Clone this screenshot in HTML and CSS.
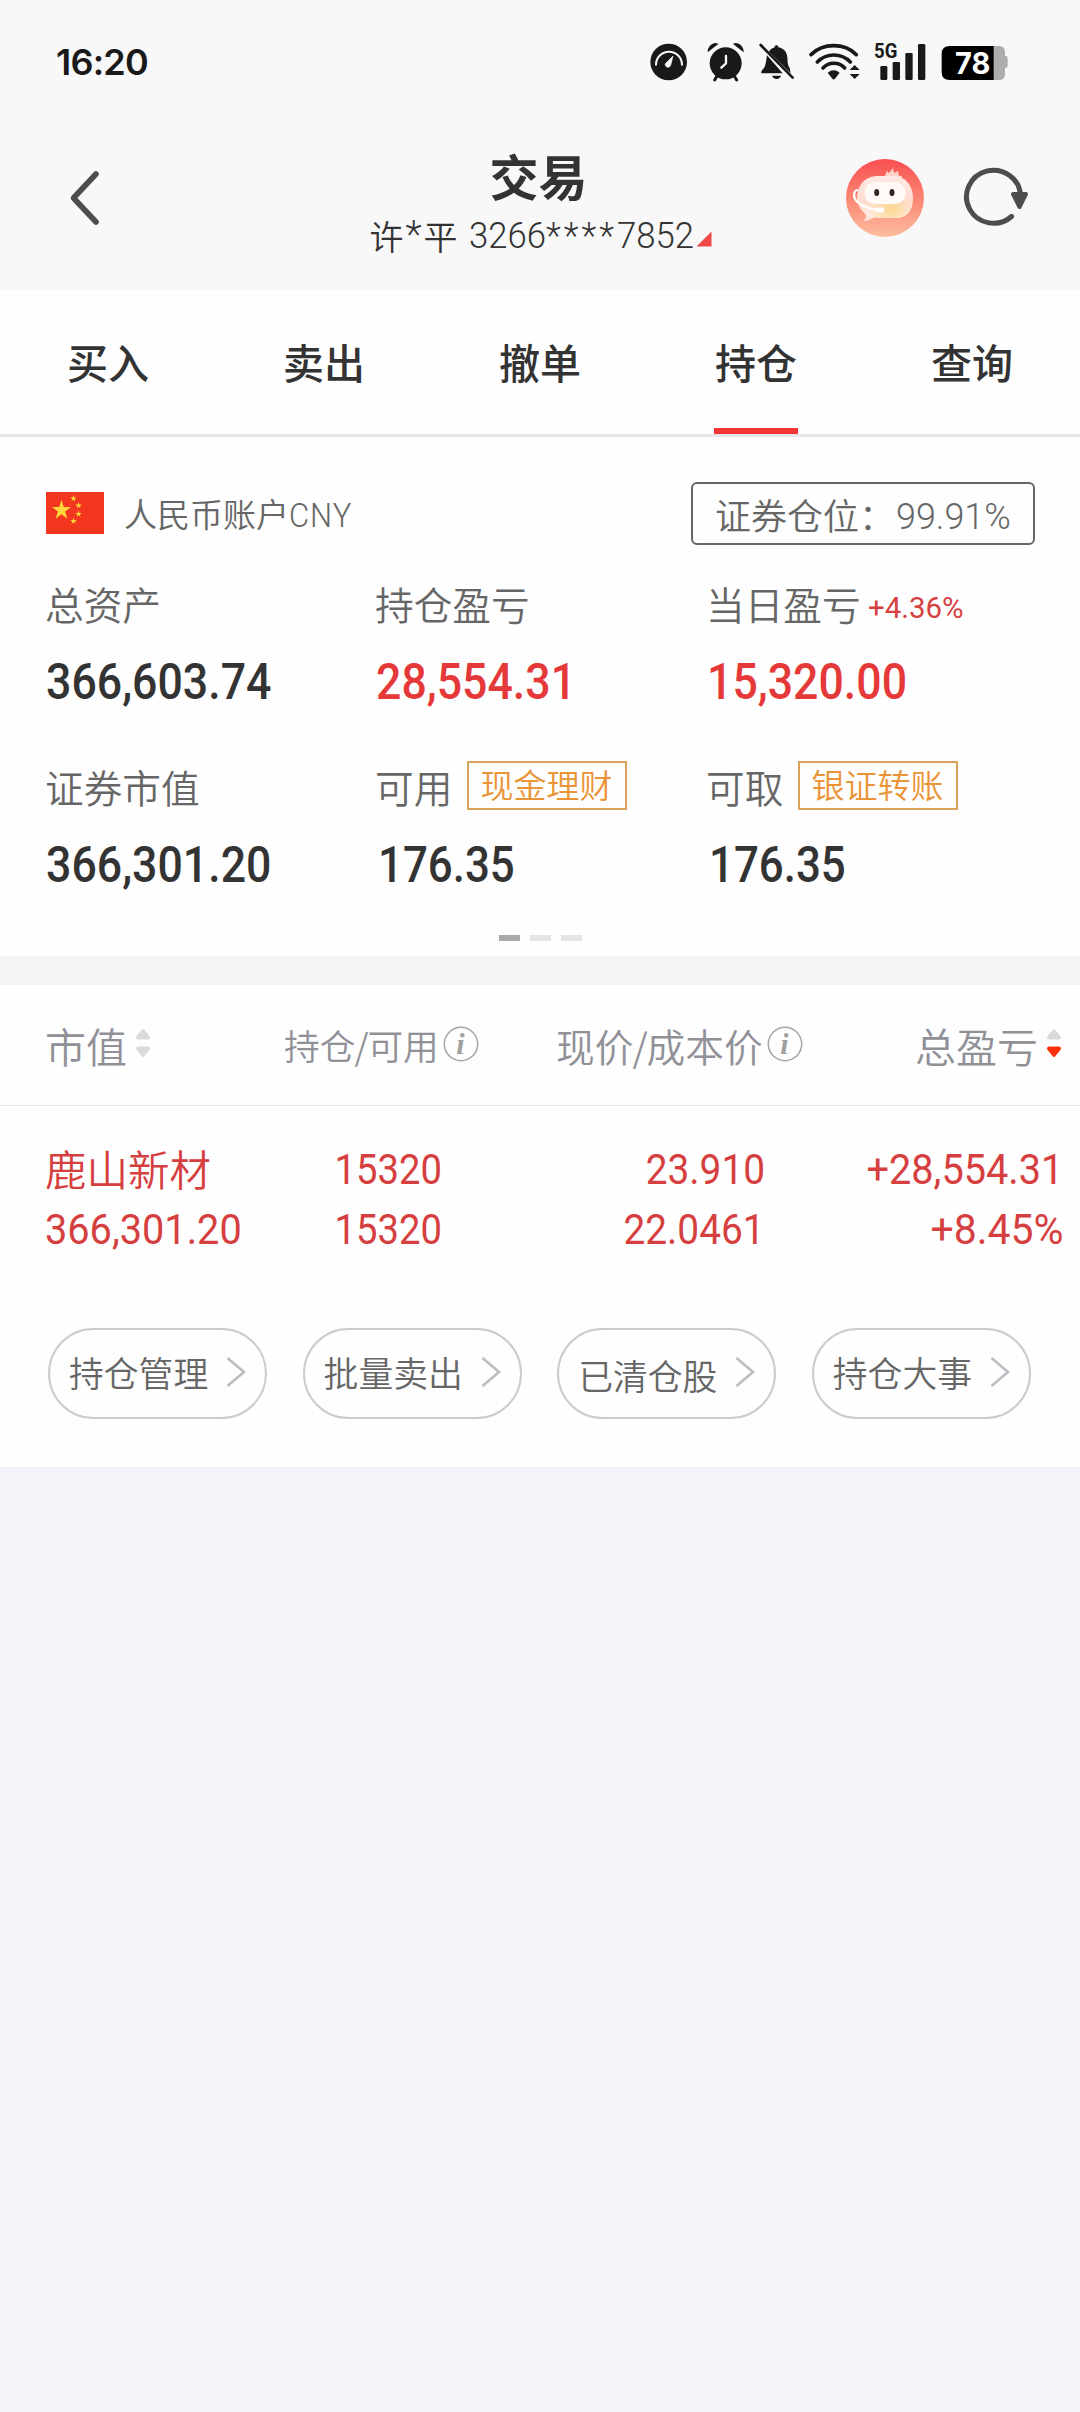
FILE: index.html
```html
<!DOCTYPE html>
<html lang="zh-CN">
<head>
<meta charset="utf-8">
<meta name="viewport" content="width=1080">
<title>交易</title>
<link rel="stylesheet" href="styles.css">
</head>
<body>
<header class="top">
  <div class="status">
    <span class="clock">16:20</span>
    <div class="status-icons">
      <svg class="ic-gauge" viewBox="60 66 112 118"><circle cx="116" cy="126" r="55" fill="#191919"/><path d="M78 134a39 39 0 1 1 78 0" fill="none" stroke="#f8f8f8" stroke-width="6" stroke-linecap="round"/><path d="M129 108l-7 28c-3 10-19 6-16-5z" fill="#f8f8f8" stroke="#f8f8f8" stroke-width="2" stroke-linejoin="round"/></svg>
      <svg class="ic-alarm" viewBox="230 66 112 118"><g fill="#191919"><circle cx="286" cy="130" r="48"/><path d="M232 97c-1-22 22-34 32-25z"/><path d="M340 97c1-22-22-34-32-25z"/></g><path d="M260 168l-7 12M312 168l7 12" stroke="#191919" stroke-width="9" stroke-linecap="round"/><path d="M287 108v22l-14 13" fill="none" stroke="#f8f8f8" stroke-width="7" stroke-linecap="round" stroke-linejoin="round"/></svg>
      <svg class="ic-bell" viewBox="388 66 106 118"><path d="M412 106L459 160H398C390 160 397 150 403 144C409 134 409 124 412 106ZM418 95C422 88 428 84 435 82C435 74 446 74 446 82C465 86 472 98 473 112C474 128 474 135 480 144L483 160Z" fill="#191919"/><path d="M427 167h27c-4 13-22 13-27 0z" fill="#191919"/><path d="M393 75l96 98" stroke="#191919" stroke-width="8" stroke-linecap="round"/></svg>
      <svg class="ic-wifi" viewBox="538 66 154 118"><g fill="none" stroke="#191919" stroke-width="11" stroke-linecap="round"><path d="M544 104C580 68 645 68 680 104"/><path d="M563 126C590 98 635 98 662 126"/><path d="M580 144C598 125 628 125 645 144"/></g><path d="M594 158q18-14 36 0l-14 18q-4 5-8 0z" fill="#191919"/><path d="M660 150l15-15 15 15zM660 162h30l-15 15z" fill="#191919"/></svg>
      <svg class="ic-signal" viewBox="732 66 156 118"><g fill="#191919"><rect x="751" y="138" width="21" height="42" rx="4"/><rect x="788" y="126" width="22" height="54" rx="4"/><rect x="826" y="99" width="22" height="81" rx="4"/><rect x="864" y="72" width="22" height="108" rx="4"/></g><text class="net" x="732" y="115" textLength="70" lengthAdjust="spacingAndGlyphs">5G</text></svg>
      <svg class="ic-battery" viewBox="934 66 200 118"><path d="M1090 78h18q18 0 18 18v12h4q4 0 4 8v20q0 8-4 8h-4v18q0 18-18 18h-18z" fill="#adadad"/><path d="M1092 78H960q-24 0-24 24v54q0 24 24 24h132z" fill="#000"/><text class="level" x="976" y="163" textLength="106" lengthAdjust="spacingAndGlyphs">78</text></svg>
    </div>
  </div>
  <nav class="nav">
    <svg class="back" viewBox="0 0 30 54"><path d="M26 3L3.500 27L26 51" fill="none" stroke="#4d4d4d" stroke-width="5.600" stroke-linecap="round" stroke-linejoin="round"/></svg>
    <div class="heading">
      <h1>交易</h1>
      <div class="account">许<span class="star">*</span>平<span class="acct-no">3266<span class="mask">****</span>7852</span><i class="corner"></i></div>
    </div>
    <div class="actions">
      <svg class="bot" viewBox="0 0 78 78">
        <defs>
          <linearGradient id="sky" x1="0" y1="0" x2="0" y2="1"><stop offset="0" stop-color="#f94f50"/><stop offset=".5" stop-color="#fa8674"/><stop offset="1" stop-color="#fdbd9f"/></linearGradient>
          <linearGradient id="head" x1="0" y1="0" x2="0" y2="1"><stop offset="0" stop-color="#ffe9e4"/><stop offset=".6" stop-color="#ffdccf"/><stop offset="1" stop-color="#fff0e6"/></linearGradient>
          <radialGradient id="glow" cx=".6" cy=".8" r=".4"><stop offset="0" stop-color="#fbd68c"/><stop offset="1" stop-color="#fbd68c" stop-opacity="0"/></radialGradient>
        </defs>
        <circle cx="39" cy="39" r="39" fill="url(#sky)"/>
        <path d="M39 17l2-5 2 2 4-5 1 5 4-2 1 5 3 0 0 6z" fill="#ffd3cb"/>
        <path d="M17 50l3 7q0 3-3 5 8 0 13-5z" fill="#ffe3d6"/>
        <path d="M30 17h17c13 0 20 10 20 23 0 12-7 19-17 19H34C20 59 12 50 11 40c0-13 7-22 19-23z" fill="url(#head)"/>
        <path d="M30 17h17c13 0 20 10 20 23 0 12-7 19-17 19H34C20 59 12 50 11 40c0-13 7-22 19-23z" fill="url(#glow)"/>
        <rect x="18.500" y="23" width="41" height="22" rx="10.500" fill="#fffaf8"/>
        <ellipse cx="30.700" cy="33.500" rx="2.500" ry="3.500" fill="#33261f"/><ellipse cx="46" cy="33.500" rx="2.500" ry="3.500" fill="#33261f"/>
        <path d="M11.500 31c-5 1-4 9 0 12 5 4 12 7 20 8" fill="none" stroke="#fff" stroke-width="2.200" stroke-linecap="round"/><rect x="29.500" y="48.500" width="9" height="5" rx="2.500" fill="#fff"/>
      </svg>
      <svg class="refresh" viewBox="0 0 64 60"><path d="M46.500 50.500A27 26.500 0 1 1 55.500 30" fill="none" stroke="#4d4d4d" stroke-width="5" stroke-linecap="round"/><path d="M48 28h13l-6.500 13z" fill="#4d4d4d" stroke="#4d4d4d" stroke-width="4" stroke-linejoin="round"/></svg>
    </div>
  </nav>
</header>

<div class="tabs">
  <a class="tab">买入</a><a class="tab">卖出</a><a class="tab">撤单</a><a class="tab active">持仓</a><a class="tab">查询</a>
</div>

<section class="assets">
  <div class="currency">
    <svg class="flag" viewBox="0 0 58 42"><rect width="58" height="42" fill="#f2361f"/><g fill="#ffd93b"><path d="M15.500 8l2.200 7.100h7.300l-5.900 4.400 2.300 7.200-5.900-4.500-5.900 4.500 2.300-7.200L6 15.100h7.300z"/><path d="M27.500 3l.8 2.400h2.500l-2 1.500.7 2.400-2-1.500-2 1.500.7-2.400-2-1.500h2.500z"/><path d="M32.600 10l.8 2.400h2.500l-2 1.500.7 2.400-2-1.500-2 1.500.7-2.400-2-1.500h2.500z"/><path d="M32.600 18.500l.8 2.400h2.500l-2 1.500.7 2.400-2-1.500-2 1.500.7-2.400-2-1.500h2.500z"/><path d="M27.500 25.500l.8 2.400h2.500l-2 1.500.7 2.400-2-1.500-2 1.500.7-2.400-2-1.500h2.500z"/></g></svg>
    <span class="currency-name">人民币账户<span class="code">CNY</span></span>
    <span class="ratio">证券仓位：<span class="ratio-value">99.91%</span></span>
  </div>
  <div class="grid">
    <div class="cell"><div class="label">总资产</div><div class="value">366,603.74</div></div>
    <div class="cell"><div class="label">持仓盈亏</div><div class="value up">28,554.31</div></div>
    <div class="cell"><div class="label">当日盈亏<span class="pct">+4.36%</span></div><div class="value up">15,320.00</div></div>
    <div class="cell"><div class="label">证券市值</div><div class="value">366,301.20</div></div>
    <div class="cell"><div class="label">可用<span class="tag">现金理财</span></div><div class="value one">176.35</div></div>
    <div class="cell"><div class="label">可取<span class="tag">银证转账</span></div><div class="value one">176.35</div></div>
  </div>
  <div class="pager"><i class="on"></i><i></i><i></i></div>
</section>

<section class="holdings">
  <div class="thead">
    <div class="th big">市值<svg class="sort" viewBox="0 0 16 30"><path d="M7 1.500q1-1 2 0l5.500 6.500q1.500 3.500-2 3.500h-9q-3.500 0-2-3.500z" fill="#dadada"/><path d="M7 28.500q1 1 2 0l5.500-6.500q1.500-3.500-2-3.500h-9q-3.500 0-2 3.500z" fill="#dadada"/></svg></div>
    <div class="th small">持仓<span class="slash">/</span>可用<svg class="info" viewBox="0 0 36 36"><circle cx="18" cy="18" r="16.700" fill="none" stroke="#a5a5a5" stroke-width="1.500"/><text class="info-i" x="17.500" y="28">i</text></svg></div>
    <div class="th mid">现价<span class="slash">/</span>成本价<svg class="info" viewBox="0 0 36 36"><circle cx="18" cy="18" r="16.700" fill="none" stroke="#a5a5a5" stroke-width="1.500"/><text class="info-i" x="17.500" y="28">i</text></svg></div>
    <div class="th big last">总盈亏<svg class="sort" viewBox="0 0 16 30"><path d="M7 1.500q1-1 2 0l5.500 6.500q1.500 3.500-2 3.500h-9q-3.500 0-2-3.500z" fill="#dadada"/><path d="M7 28.500q1 1 2 0l5.500-6.500q1.500-3.500-2-3.500h-9q-3.500 0-2 3.500z" fill="#fd3009"/></svg></div>
  </div>
  <div class="row">
    <div class="col left"><span class="name">鹿山新材</span><span class="n amount">366,301.20</span></div>
    <div class="col"><span class="n">15320</span><span class="n">15320</span></div>
    <div class="col"><span class="n price">23.910</span><span class="n price">22.0461</span></div>
    <div class="col"><span class="n amount">+28,554.31</span><span class="n percent">+8.45%</span></div>
  </div>
  <div class="links">
    <a class="link">持仓管理<svg class="chev" viewBox="0 0 20 30"><path d="M1.500 1l16.500 14L1.500 29" fill="none" stroke="#bcbcc2" stroke-width="2.600"/></svg></a>
    <a class="link">批量卖出<svg class="chev" viewBox="0 0 20 30"><path d="M1.500 1l16.500 14L1.500 29" fill="none" stroke="#bcbcc2" stroke-width="2.600"/></svg></a>
    <a class="link"><span class="low">已清仓股</span><svg class="chev" viewBox="0 0 20 30"><path d="M1.500 1l16.500 14L1.500 29" fill="none" stroke="#bcbcc2" stroke-width="2.600"/></svg></a>
    <a class="link">持仓大事<svg class="chev" viewBox="0 0 20 30"><path d="M1.500 1l16.500 14L1.500 29" fill="none" stroke="#bcbcc2" stroke-width="2.600"/></svg></a>
  </div>
</section>
</body>
</html>
```
FILE: styles.css
```css
* { box-sizing: border-box; }
body {
  margin: 0;
  width: 1080px;
  min-height: 2412px;
  background: #f2f4f9;
  color: #333;
  font-family: "Noto Sans CJK SC", sans-serif;
  font-weight: 350;
  white-space: nowrap;
}
svg { display: block; flex: none; overflow: visible; }

/* status bar */
.top { height: 290px; background: #f8f8f8; }
.status {
  display: flex;
  align-items: center;
  justify-content: space-between;
  height: 124px;
  padding: 0 72px 0 56px;
}
.clock { font: 600 36px/40px Inter, sans-serif; color: #191919; letter-spacing: -0.8px; }
.status-icons { display: flex; }
.status-icons svg { height: 39.33px; }
.ic-gauge { width: 37.33px; }
.ic-alarm { width: 37.33px; margin-left: 19.33px; }
.ic-bell { width: 35.33px; margin-left: 15.33px; }
.ic-wifi { width: 51.33px; margin-left: 14.67px; }
.ic-signal { width: 52px; margin-left: 13.33px; }
.ic-battery { width: 66.67px; margin-left: 15.33px; }
.net { font: 700 61px Roboto, sans-serif; fill: #191919; }
.level { font: 700 91px Inter, sans-serif; fill: #fff; }

/* title bar */
.nav { display: grid; grid-template-columns: 1fr auto 1fr; height: 148px; }
.back { width: 30px; height: 54px; margin: 47px 0 0 70px; }
.heading { padding-top: 21px; text-align: center; }
h1 { margin: 0 3px 0 0; font-size: 49px; line-height: 60px; font-weight: 700; }
.account {
  display: flex;
  align-items: center;
  justify-content: center;
  height: 60px;
  padding-left: 1px;
  font-size: 34px;
}
.star { width: 20px; font: 300 38px/58px Roboto, sans-serif; }
.acct-no {
  width: 225px;
  margin: 2px 0 0 11px;
  font: 300 37px/58px Roboto, sans-serif;
  text-align: left;
  transform: scaleX(.938);
  transform-origin: left;
}
.mask { letter-spacing: 3.2px; }
.corner {
  width: 15px;
  height: 15px;
  margin: 8px 0 0 3px;
  background: #f24848;
  clip-path: polygon(100% 0, 100% 100%, 0 100%);
}
.actions { display: flex; justify-content: flex-end; padding-right: 51px; }
.bot { width: 78px; height: 78px; margin-top: 35px; }
.refresh { width: 64px; height: 60px; margin: 42px 0 0 41px; }

/* tabs */
.tabs {
  display: grid;
  grid-template-columns: repeat(5, 216px);
  height: 147px;
  background: #fefefe;
  border-bottom: 3px solid #e6e6ea;
}
.tab {
  justify-self: center;
  width: 84px;
  height: 144px;
  text-align: center;
  font-size: 41px;
  line-height: 143px;
  font-weight: 500;
}
.tab.active { border-bottom: 6px solid #f23434; }

/* account summary */
.assets { height: 519px; padding: 45px 45px 0 46px; background: #fefefe; }
.currency { display: flex; align-items: center; height: 63px; color: #666; }
.flag { width: 58px; height: 42px; margin-top: -2px; }
.currency-name { margin: 2px 0 0 20px; font-size: 33px; line-height: 60px; }
.code {
  display: inline-block;
  font: 300 33px/60px Roboto, sans-serif;
  letter-spacing: 1px;
  transform: scaleX(.94);
  transform-origin: left;
}
.ratio {
  display: flex;
  width: 344px;
  height: 63px;
  margin-left: auto;
  padding-left: 22px;
  border: 2px solid #666;
  border-radius: 6px;
  font-size: 36px;
  line-height: 60px;
}
.ratio-value {
  font: 300 37px/65px Roboto, sans-serif;
  margin-left: 1px;
  transform: scaleX(.97);
  transform-origin: left;
}
.grid {
  display: grid;
  grid-template-columns: 330px 331px auto;
  row-gap: 45px;
  margin-top: 28px;
}
.label {
  display: flex;
  align-items: center;
  height: 60px;
  margin-left: -1px;
  font-size: 38.7px;
  line-height: 58px;
  color: #666;
}
.pct {
  margin: 10px 0 0 7px;
  font: 400 30px/40px Roboto, sans-serif;
  color: #d64040;
  transform: scaleX(.98);
  transform-origin: left;
}
.tag {
  width: 160px;
  height: 49px;
  margin: -2px 0 0 15px;
  padding-left: 11px;
  border: 2px solid #dba25c;
  font-size: 33px;
  line-height: 43px;
  color: #ea9437;
}
.value {
  width: max-content;
  height: 60px;
  margin-top: 18px;
  font: 500 50px/62px Roboto, sans-serif;
  transform: scaleX(.893);
  transform-origin: left;
}
.value.one { margin-left: 2px; transform: scaleX(.877); }
.up { color: #e53939; }
.pager { display: flex; justify-content: center; gap: 10px; margin: 41px 1px 0 0; }
.pager i { width: 21px; height: 6px; background: #e5e5e5; }
.pager .on { background: #aaa; }

/* holdings table */
.holdings { height: 511px; border-top: 29px solid #f4f4f4; background: #fefefe; }
.thead {
  display: grid;
  grid-template-columns: 239px 272px 300px 206px;
  height: 121px;
  padding-left: 45px;
  border-bottom: 1px solid #e3e3e3;
  color: #909097;
}
.th { display: flex; align-items: center; height: 120px; line-height: 60px; }
.th.last { justify-content: flex-end; }
.big { font-size: 41px; }
.small { font-size: 35.7px; }
.mid { font-size: 38.7px; }
.slash { margin: 0 -1px; }
.sort { width: 16px; height: 30px; margin: -4px 0 0 8px; }
.info { width: 36px; height: 36px; margin: -2px 0 0 4px; }
.info-i { font: italic 700 30px "Liberation Serif", serif; fill: #a0a0a0; text-anchor: middle; }
.row {
  display: grid;
  grid-template-columns: 239px 158px 323px 298px;
  height: 153px;
  padding: 34px 0 0 45px;
  color: #d63f3f;
}
.col { display: flex; flex-direction: column; align-items: flex-end; }
.col.left { align-items: flex-start; }
.name { font-size: 41.5px; line-height: 56px; height: 60px; }
.n {
  font: 400 42px/60px Roboto, sans-serif;
  transform: scaleX(.91);
  transform-origin: right;
}
.n.amount { transform: scaleX(.945); }
.n.price { transform: scaleX(.925); }
.n.percent { transform: scaleX(.975); }
.left .n { transform-origin: left; }
.links {
  display: grid;
  grid-template-columns: repeat(4, 219px);
  column-gap: 35.6px;
  margin: 69px 0 0 48px;
}
.link {
  display: flex;
  align-items: center;
  justify-content: space-between;
  height: 91px;
  padding: 0 19px;
  border: 2px solid #cbcbd0;
  border-radius: 46px;
  font-size: 34.8px;
  line-height: 80px;
  padding-bottom: 3px;
  color: #666;
}
.low { padding-top: 5px; }
.chev { width: 20px; height: 30px; }
```
